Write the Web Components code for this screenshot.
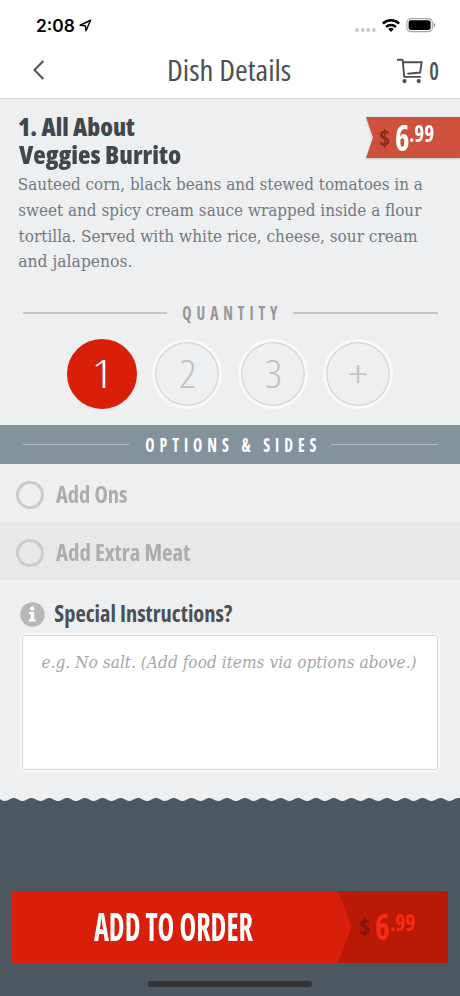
<!DOCTYPE html>
<html lang="en">
<head>
<meta charset="utf-8">
<title>Dish Details</title>
<style>
html,body{margin:0;padding:0}
body{width:460px;height:996px;overflow:hidden;background:#4d575f;font-family:"Open Sans","Noto Sans",sans-serif;font-stretch:75%}
</style>
</head>
<body>
<dish-screen></dish-screen>
<script>
const make = (name, html, setup) => customElements.define(name, class extends HTMLElement {
  connectedCallback() {
    if (this.shadowRoot) return;
    const t = document.createElement('template');
    t.innerHTML = typeof html === 'function' ? html(this) : html;
    this.attachShadow({ mode: 'open' }).append(t.content.cloneNode(true));
    if (setup) setup(this);
  }
});

/* One line of text whose glyphs are squeezed horizontally to an exact ink width (attribute w). */
make('fit-text', `<style>
  :host{display:block;white-space:nowrap;flex:none}
  span{display:inline-block;transform-origin:0 50%}
</style><span><slot></slot></span>`, el => {
  const w = +el.getAttribute('w');
  el.style.width = w + 'px';
  const span = el.shadowRoot.querySelector('span');
  const cs = getComputedStyle(el);
  const ctx = document.createElement('canvas').getContext('2d');
  ctx.font = `${cs.fontStyle} ${cs.fontWeight} ${parseFloat(cs.fontSize) * 10}px ${cs.fontFamily}`;
  if (cs.fontStretch === '75%') ctx.fontStretch = 'condensed';
  ctx.letterSpacing = (parseFloat(cs.letterSpacing) || 0) * 10 + 'px';
  const m = ctx.measureText(el.textContent);
  const k = span.getBoundingClientRect().width / m.width;
  const left = -m.actualBoundingBoxLeft * k;
  const ink = (m.actualBoundingBoxRight + m.actualBoundingBoxLeft) * k;
  const s = w / ink;
  span.style.transform = `translateX(${-left * s}px) scaleX(${s})`;
});

make('status-bar', `<style>
  :host{display:flex;height:50px;box-sizing:border-box;padding:0 24px 0 36.5px;align-items:center;color:#000;background:#fff}
  fit-text{font:600 17px/20px Inter,sans-serif;margin:1px 5.500px 0 0}
  .gap{flex:1}
  svg{display:block}
</style>
<fit-text w="37">2:08</fit-text>
<svg width="13" height="13" viewBox="0 0 13 13"><path d="M1.2 6.3 11.6 1.3 7 11.8 6.3 6.7Z" fill="none" stroke="#000" stroke-width="1.5" stroke-linejoin="round"/></svg>
<div class="gap"></div>
<svg width="82" height="16" viewBox="354 17 82 16">
  <g fill="#c8c8c8"><circle cx="357.2" cy="30" r="2"/><circle cx="362.8" cy="30" r="2"/><circle cx="368.3" cy="30" r="2"/><circle cx="373.9" cy="30" r="2"/></g>
  <g fill="none" stroke="#000" stroke-width="2.6"><path d="M382.9 23.6a11.6 11.6 0 0 1 16.2 0"/><path d="M386.1 27a7 7 0 0 1 9.8 0"/></g>
  <path d="M388.2 29a4.3 4.3 0 0 1 5.6 0L391 32Z"/>
  <rect x="406.9" y="18.6" width="25.4" height="13" rx="3.8" fill="none" stroke="#a5a5a5" stroke-width="1.1"/>
  <rect x="408.6" y="20.3" width="22" height="9.6" rx="2.2"/>
  <path d="M433.7 23v4.2q1.7-.6 1.7-2.1T433.7 23Z" fill="#888"/>
</svg>`);

make('nav-bar', `<style>
  :host{display:grid;grid-template-columns:136px 1fr 40.5px;align-items:center;height:49px;box-sizing:border-box;padding:0 22.500px 8px 33px;border-bottom:1px solid #d8dbde;color:#4b5156;background:#fff}
  svg{display:block}
  .title{font-size:28.5px;line-height:30px;font-weight:400}
  .cart{display:flex;align-items:center;justify-content:space-between}
  .cart fit-text{font-size:25px;line-height:28px;font-weight:550}
</style>
<svg width="12" height="20" viewBox="0 0 12 20"><path d="M10.3 1 1.5 10l8.8 9" fill="none" stroke="#4b5156" stroke-width="2"/></svg>
<fit-text class="title" w="121.500">Dish Details</fit-text>
<div class="cart">
<svg width="27" height="26" viewBox="0 -1 27 26"><g fill="none" stroke="#4b5156" stroke-width="1.9"><path d="M0 1.800H4.600Q6 1.800 6.200 4.200H24.600L23.200 14.500 10.400 15.700M5.900 4 7.200 18.900H23.800"/></g><circle cx="7.5" cy="23" r="2.100" fill="#4b5156"/><circle cx="21.700" cy="23" r="2.100" fill="#4b5156"/></svg>
<fit-text w="8">0</fit-text></div>`);

make('price-value', `<style>
  :host{display:flex;align-items:flex-start}
  .d{font-size:22px;line-height:24px;font-weight:800;color:var(--dollar);margin:9px 6.5px 0 0}
  .n{font-size:36px;line-height:40px;font-weight:750;color:var(--num);margin:.5px 2px 0 0}
  .c{font-size:22.5px;line-height:24px;font-weight:750;color:var(--num);margin-top:4.500px}
</style><fit-text class="d" w="9.5">$</fit-text><fit-text class="n" w="12.5">6</fit-text><fit-text class="c" w="23.5">.99</fit-text>`);

make('price-tag', `<style>
  :host{display:block;flex:none;width:94px;height:41px;filter:drop-shadow(0 1.5px 1px #0003);--dollar:#8f2c1c;--num:#fff}
  div{height:41px;box-sizing:border-box;padding-left:13.5px;background:#ce513b;clip-path:polygon(0 0,100% 0,100% 100%,0 100%,7px 50%)}
</style><div><price-value></price-value></div>`);

make('dish-info', `<style>
  :host{display:block;height:187px;padding:15px 0 0 18.5px;box-sizing:border-box}
  .top{display:flex;justify-content:space-between;height:58px}
  .name{font-size:24.5px;line-height:27.7px;font-weight:800;color:#41474c;margin-top:-1px}
  price-tag{margin-top:3px}
  .desc{font:17.500px/25.8px "DejaVu Serif Condensed","DejaVu Serif",serif;color:#727a81;font-stretch:75%}
</style>
<div class="top"><div class="name"><fit-text w="115.5">1. All About</fit-text><fit-text w="161.5">Veggies Burrito</fit-text></div><price-tag></price-tag></div>
<div class="desc"><fit-text w="403.5">Sauteed corn, black beans and stewed tomatoes in a</fit-text><fit-text w="402.5">sweet and spicy cream sauce wrapped inside a flour</fit-text><fit-text w="398">tortilla. Served with white rice, cheese, sour cream</fit-text><fit-text w="112">and jalapenos.</fit-text></div>`);

make('ruled-heading', el => `<style>
  :host{display:flex;align-items:center;padding:0 22.5px;box-sizing:border-box}
  i{flex:1;height:1.5px;background:var(--rule)}
  fit-text{font-size:19px;line-height:22px;font-weight:750;letter-spacing:6px;margin:0 15.500px 0 16.500px}
</style><i></i><fit-text w="${el.getAttribute('w')}">${el.getAttribute('label')}</fit-text><i></i>`);

make('qty-option', el => `<style>
  :host{display:flex;width:70px;height:70px;box-sizing:border-box;border-radius:50%;align-items:center;justify-content:center;border:3px solid #f8f9fa;color:#bfc1c3;background:#eeeff1;box-shadow:inset 0 0 0 1.3px #d3d4d6}
  :host([on]){background:#d91e09;border-color:#d91e09;color:#fff;box-shadow:none}
  fit-text{font-size:39px;line-height:46px;font-weight:300;margin-top:-3px}
  :host([on]) fit-text{font-weight:350;margin-right:3px}
</style><fit-text w="${el.getAttribute('w')}">${el.getAttribute('value')}</fit-text>`);

make('option-row', `<style>
  :host{display:flex;align-items:center;height:58px;padding:3px 0 0 16px;box-sizing:border-box;color:#abadaf}
  i{width:28px;height:28px;box-sizing:border-box;border:3px solid #c9cbcd;border-radius:50%;margin-right:12px}
  ::slotted(fit-text){font-size:22.5px;line-height:28px;font-weight:700}
</style><i></i><slot></slot>`);

make('instructions-box', `<style>
  :host{display:block;height:219px;padding:21px 22px 0;box-sizing:border-box}
  .h{display:flex;align-items:center;height:26px;margin-bottom:8px;margin-left:-2px}
  .h fit-text{font-size:22.5px;line-height:26px;font-weight:700;color:#4b5156;margin-left:9.5px}
  .box{height:135px;box-sizing:border-box;border:1px solid #d3d6da;border-radius:3px;background:#fff;box-shadow:0 0 0 2px #f7f8f9;padding:13px 19px}
  .box fit-text{font:italic 17.500px/26px "DejaVu Serif Condensed","DejaVu Serif",serif;font-stretch:75%;color:#a5a7a9}
</style>
<div class="h"><svg width="25" height="25" viewBox="0 0 25 25"><circle cx="12.5" cy="12.5" r="12.2" fill="#b5b7b9"/><circle cx="12.2" cy="6.5" r="2.300" fill="#fff"/><path d="M9 10h5.200v7.600h1.600v2H8.900v-2h1.700v-5.600H9Z" fill="#fff"/></svg><fit-text w="177">Special Instructions?</fit-text></div>
<div class="box"><fit-text w="374">e.g. No salt. (Add food items via options above.)</fit-text></div>`);

make('order-footer', `<style>
  :host{display:block;background:#4d575f;height:197px}
  .wave{display:block;margin-top:-2px;background:#4d575f}
  .btn{display:flex;margin:88px 12px 0 11.5px;height:72px;border-radius:2px;overflow:hidden;background:#d91e09}
  .main{flex:1;display:flex;align-items:center;padding-left:82.500px;color:#fff}
  .main fit-text{font-size:40px;line-height:48px;font-weight:750;margin-top:-2px}
  .side{width:110px;box-sizing:border-box;padding:15px 0 0 22px;background:#b81a05;clip-path:polygon(0 0,100% 0,100% 100%,0 100%,13.500px 50%);--dollar:#86140a;--num:#fb2a14}
  .home{width:164px;height:6px;border-radius:3px;background:#333437;margin:17.5px auto 0}
</style>
<svg class="wave" width="460" height="6"></svg>
<div class="btn"><div class="main"><fit-text w="159">ADD TO ORDER</fit-text></div><div class="side"><price-value></price-value></div></div>
<div class="home"></div>`, el => {
  let top = '';
  for (let x = 0; x <= 460; x++) top += `L${x} ${(2.5 - 1.5 * Math.cos((x - 13.7) / 17.78 * 2 * Math.PI)).toFixed(2)} `;
  el.shadowRoot.querySelector('.wave').innerHTML = `<path d="M0 0${top}V0Z" fill="#edeff1"/>`;
});

make('dish-screen', `<style>
  :host{display:flex;flex-direction:column;width:460px;height:996px;background:#edeff1}
  :host>*,ruled-heading,.qty{flex-shrink:0}
  .q{height:54px;padding-top:2px;color:#96989a;--rule:#c3c5c7;margin-top:-1px}
  .qty{display:flex;justify-content:center;gap:15.500px;height:86px}
  .band{height:39px;background:#84929c;color:#fff;--rule:#b0bbc3}
  .alt{background:#e7e8ea}
</style>
<status-bar></status-bar><nav-bar></nav-bar>
<dish-info></dish-info>
<ruled-heading class="q" w="94.500" label="QUANTITY"></ruled-heading>
<div class="qty"><qty-option on value="1" w="10.500"></qty-option><qty-option value="2" w="15"></qty-option><qty-option value="3" w="14"></qty-option><qty-option value="+" w="18"></qty-option></div>
<ruled-heading class="band" w="170" label="OPTIONS &amp;amp; SIDES"></ruled-heading>
<option-row><fit-text w="71">Add Ons</fit-text></option-row>
<option-row class="alt"><fit-text w="134">Add Extra Meat</fit-text></option-row>
<instructions-box></instructions-box>
<order-footer></order-footer>`);
</script>
</body>
</html>
